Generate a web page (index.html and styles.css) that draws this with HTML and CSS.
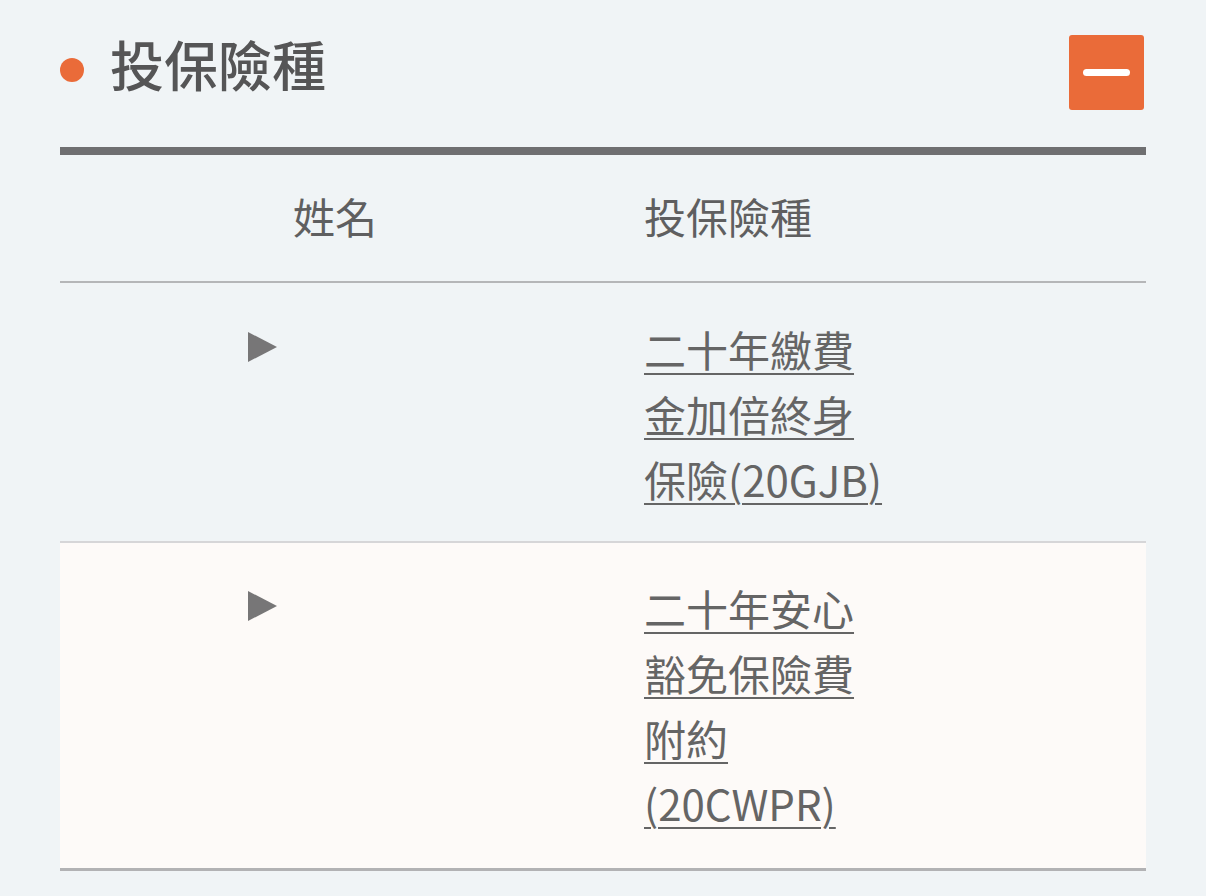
FILE: index.html
```html
<!DOCTYPE html>
<html lang="zh-Hant">
<head>
<meta charset="utf-8">
<title>投保險種</title>
<link rel="stylesheet" href="styles.css">
</head>
<body>
<section class="panel">
  <div class="panel-head">
    <h2 class="panel-title"><span class="dot"></span>投保險種</h2>
    <button class="collapse" type="button" aria-label="收合"><span class="bar"></span></button>
  </div>
  <div class="table">
    <div class="row head">
      <div class="cell name">姓名</div>
      <div class="cell plan">投保險種</div>
    </div>
    <div class="row">
      <div class="cell name"><span class="tri"></span><span class="redact"></span></div>
      <div class="cell plan"><a href="#">二十年繳費金加倍終身保險(20GJB)</a></div>
    </div>
    <div class="row alt last">
      <div class="cell name"><span class="tri"></span><span class="redact"></span></div>
      <div class="cell plan"><a href="#">二十年安心豁免保險費附約(20CWPR)</a></div>
    </div>
  </div>
</section>
</body>
</html>
```
FILE: styles.css
```css
html, body {
  margin: 0;
  padding: 0;
  background: #f0f4f6;
}
body {
  font-family: "Noto Sans CJK TC", "Noto Sans", sans-serif;
  color: #5e5e5e;
}
.panel {
  width: 1086px;
  margin-left: 60px;
}
.panel-head {
  display: flex;
  align-items: flex-start;
  justify-content: space-between;
  height: 147px;
  box-sizing: border-box;
  padding-top: 35px;
}
.panel-title {
  display: flex;
  align-items: center;
  margin: 2px 0 0;
  font-size: 54px;
  font-weight: 500;
  color: #555556;
  line-height: 1;
  letter-spacing: 0;
}
.dot {
  width: 24px;
  height: 24px;
  border-radius: 50%;
  background: #ea6b39;
  margin-right: 26px;
  margin-top: 11px;
}
.collapse {
  width: 75px;
  height: 75px;
  margin-right: 2px;
  border: none;
  border-radius: 3px;
  background: #ea6b39;
  display: flex;
  align-items: center;
  justify-content: center;
  padding: 0;
}
.bar {
  width: 47px;
  height: 7px;
  border-radius: 4px;
  background: #ffffff;
}
.table {
  border-top: 8px solid #6f6f71;
}
.row {
  display: grid;
  grid-template-columns: 550px 1fr;
  border-bottom: 2px solid #d6d6d8;
  padding: 33px 0 30px;
}
.row.head {
  border-bottom: 2px solid #b5b6b8;
  padding: 28px 0 33px;
}
.row.alt {
  background: #fdfaf8;
  padding: 32px 0 33px;
}
.row.last {
  border-bottom: 3px solid #b2b2b4;
}
.cell {
  font-size: 42px;
  line-height: 65px;
}
.cell.name {
  display: flex;
  justify-content: center;
  align-items: flex-start;
}
.head .cell {
  color: #5f5f60;
  font-weight: 400;
}
.cell.plan {
  padding-left: 34px;
}
.cell.plan a {
  display: block;
  max-width: 250px;
  color: #656565;
  text-decoration: underline;
  text-decoration-thickness: 2px;
  text-underline-offset: 6px;
}
.tri {
  width: 0;
  height: 0;
  margin-top: 16px;
  border-top: 15px solid transparent;
  border-bottom: 15px solid transparent;
  border-left: 29px solid #777677;
}
.redact {
  display: block;
  width: 145px;
  height: 65px;
}
```
